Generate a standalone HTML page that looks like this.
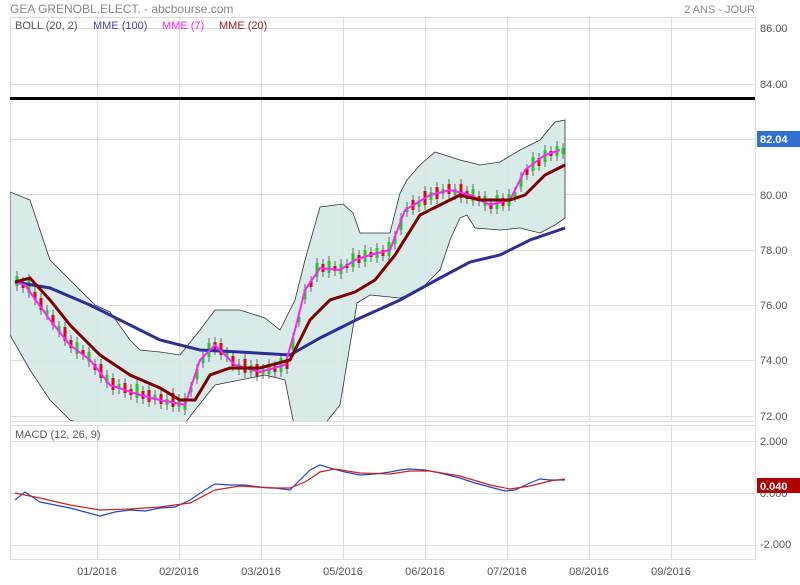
<!DOCTYPE html>
<html><head><meta charset="utf-8"><style>
body{margin:0;background:#fff;}
svg text{font-family:"Liberation Sans",sans-serif;}
</style></head><body>
<svg width="800" height="580" xmlns="http://www.w3.org/2000/svg">
<text x="10" y="13" font-size="12" fill="#888">GEA GRENOBL.ELECT. - abcbourse.com</text>
<text x="755" y="13" font-size="11" fill="#888" text-anchor="end">2 ANS - JOUR</text>
<g stroke="#ddd" stroke-width="1" fill="none">
<rect x="10.5" y="17.5" width="745" height="404"/>
<rect x="10.5" y="425.5" width="745" height="134"/>
<path d="M97.5 17V421M179.5 17V421M261.5 17V421M343.5 17V421M425.5 17V421M507.5 17V421M589.5 17V421M671.5 17V421M97.5 426V559M179.5 426V559M261.5 426V559M343.5 426V559M425.5 426V559M507.5 426V559M589.5 426V559M671.5 426V559"/>
<path d="M10 28.5H755M10 84.5H755M10 139.5H755M10 194.5H755M10 250.5H755M10 305.5H755M10 360.5H755M10 416.5H755M10 441.5H755M10 493.5H755M10 545.5H755"/>
</g>
<g font-size="11" fill="#555">
<text x="760" y="32">86.00</text><text x="760" y="88">84.00</text><text x="760" y="199">80.00</text><text x="760" y="254">78.00</text><text x="760" y="309">76.00</text><text x="760" y="364">74.00</text><text x="760" y="420">72.00</text>
<text x="760" y="445">2.000</text><text x="760" y="497">0.000</text><text x="760" y="548">-2.000</text>
<text x="97" y="575" text-anchor="middle">01/2016</text><text x="179" y="575" text-anchor="middle">02/2016</text><text x="261" y="575" text-anchor="middle">03/2016</text><text x="343" y="575" text-anchor="middle">05/2016</text><text x="425" y="575" text-anchor="middle">06/2016</text><text x="507" y="575" text-anchor="middle">07/2016</text><text x="589" y="575" text-anchor="middle">08/2016</text><text x="671" y="575" text-anchor="middle">09/2016</text>
</g>
<rect x="757" y="131" width="43" height="16" fill="#3070d0"/>
<text x="760" y="143" font-size="11" fill="#fff" font-weight="bold">82.04</text>
<rect x="757" y="478" width="43" height="15" fill="#b00000"/>
<text x="760" y="490" font-size="11" fill="#fff" font-weight="bold">0.040</text>
<defs><clipPath id="c"><rect x="10" y="18" width="745" height="403"/></clipPath></defs>
<g clip-path="url(#c)">
<path fill="#d4e9e6" fill-opacity="0.9" stroke="#333" stroke-width="0.8" d="M10 192L30 200L50 260L70 280L95 305L110 312L130 340L140 350L160 352L180 355L200 330L215 310L240 310L265 318L280 330L295 300L305 260L320 207L343 204L353 213L360 233L390 233L400 193L407 180L420 165L435 152L460 160L480 165L500 162L520 150L540 140L555 122L565 120L565 218L555 225L540 233L520 228L500 230L475 228L467 215L460 218L450 240L440 270L420 290L400 298L370 295L357 303L340 405L320 430L295 430L285 380L265 375L240 380L215 385L195 410L180 430L100 430L70 420L50 400L30 370L10 335Z"/>
<path fill="none" stroke="#333" stroke-width="0.7" d="M17 271V291M23 277V293M29 274V298M35 287V305M41 293V315M47 305V320M53 310V330M59 321V337M65 322V346M71 335V353M77 337V359M83 345V360M89 347V367M95 359V375M101 359V383M107 370V388M113 373V395M119 379V394M125 378V398M131 384V400M137 379V403M143 386V404M149 385V407M155 390V405M161 389V409M167 394V410M173 388V412M179 394V412M185 393V415M191 382V397M197 364V384M203 352V368M209 338V362M215 337V355M221 338V360M227 347V362M233 351V371M239 359V375M245 354V378M251 360V378M257 359V381M263 364V379M269 359V379M275 361V377M281 353V377M287 356V374M293 333V355M299 312V327M305 284V304M311 276V292M317 258V282M323 259V277M329 256V278M335 261V276M341 259V279M347 259V273M353 248V272M359 250V268M365 245V267M371 247V262M377 243V263M383 245V261M389 237V261M395 231V249M401 213V235M407 202V217M413 195V215M419 196V212M425 186V210M431 187V205M437 182V204M443 184V199M449 179V199M455 184V200M461 179V203M467 186V204M473 184V206M479 191V206M485 191V211M491 198V214M497 190V214M503 193V211M509 189V211M515 187V202M521 172V192M527 164V180M533 152V176M539 153V171M545 145V167M551 146V161M557 141V161M563 143V159"/>
<path fill="none" stroke="#22cc22" stroke-width="3" d="M17 276V286M29 279V293M47 310V315M59 326V332M77 342V354M89 352V362M107 375V383M119 384V389M137 384V398M155 395V400M167 399V405M179 399V407M185 398V410M191 387V392M197 369V379M203 357V363M209 343V357M227 352V357M239 364V370M251 365V373M263 369V374M269 364V374M281 358V372M293 338V350M299 317V322M305 289V299M317 263V277M329 261V273M341 264V274M353 253V267M365 250V262M377 248V258M389 242V256M395 236V244M401 218V230M407 207V212M419 201V207M431 192V200M443 189V194M455 189V195M473 189V201M485 196V206M497 195V209M509 194V206M515 192V197M521 177V187M533 157V171M545 150V162M557 146V156M563 148V154"/>
<path fill="none" stroke="#cc1111" stroke-width="3" d="M23 282V288M35 292V300M41 298V310M53 315V325M65 327V341M71 340V348M83 350V355M95 364V370M101 364V378M113 378V390M125 383V393M131 389V395M143 391V399M149 390V402M161 394V404M173 393V407M215 342V350M221 343V355M233 356V366M245 359V373M257 364V376M275 366V372M287 361V369M311 281V287M323 264V272M335 266V271M347 264V268M359 255V263M371 252V257M383 250V256M413 200V210M425 191V205M437 187V199M449 184V194M461 184V198M467 191V199M479 196V201M491 203V209M503 198V206M527 169V175M539 158V166M551 151V156"/>
<polyline fill="none" stroke="#2e2e99" stroke-width="3" points="15,282 50,288 90,305 130,325 160,340 200,350 240,352 290,355 320,338 360,318 400,300 440,278 470,262 500,255 530,240 565,228"/>
<polyline fill="none" stroke="#ff22ff" stroke-width="2" points="15,282 25,285 50,320 70,345 90,360 110,385 140,395 160,400 185,405 200,360 215,345 235,365 260,372 285,365 295,330 305,290 320,268 340,270 355,260 370,255 390,250 405,210 430,195 450,190 470,195 490,205 510,200 525,170 545,155 560,150"/>
<polyline fill="none" stroke="#800000" stroke-width="3" points="15,282 30,278 50,300 70,325 100,355 130,375 160,388 180,400 195,400 210,375 230,368 260,368 290,360 310,320 330,300 355,292 375,280 395,255 420,215 440,205 460,195 480,200 510,200 525,195 545,175 565,165"/>
</g>
<line x1="10" y1="98.5" x2="755" y2="98.5" stroke="#000" stroke-width="3"/>
<g font-size="11"><text x="15" y="29" fill="#555">BOLL (20, 2)</text><text x="93" y="29" fill="#4444aa">MME (100)</text><text x="162" y="29" fill="#ff22ff">MME (7)</text><text x="219" y="29" fill="#a02020">MME (20)</text></g>
<text x="15" y="438" font-size="11" fill="#555">MACD (12, 26, 9)</text>
<polyline fill="none" stroke="#2244cc" stroke-width="1.2" points="15,500 25,492 40,502 55,505 70,508 85,512 100,516 115,512 130,510 145,511 160,508 175,507 190,500 205,490 215,484 230,485 245,485 260,487 275,488 290,490 300,480 310,470 320,465 330,468 345,472 360,475 375,474 390,472 400,470 410,469 425,470 440,473 460,478 475,483 490,487 505,491 515,490 530,483 540,479 550,480 565,480"/>
<polyline fill="none" stroke="#cc2222" stroke-width="1.2" points="15,493 40,498 70,505 100,510 130,509 160,507 190,503 215,490 240,486 270,488 290,488 305,482 320,472 335,469 360,473 390,474 410,471 430,471 460,476 490,485 510,489 530,486 550,481 565,479"/>
</svg>
</body></html>
